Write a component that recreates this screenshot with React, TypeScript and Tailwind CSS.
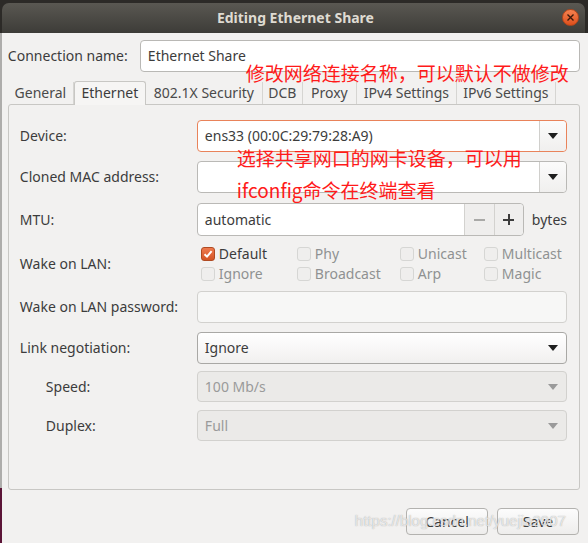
const Arrow = ({ muted = false }: { muted?: boolean }) => (
    <svg width="10" height="6" viewBox="0 0 10 6" className="shrink-0">
        <polygon points="0,0 10,0 5,6" fill={muted ? '#9a9a9a' : '#1e1e1e'} />
    </svg>
);

const Check = ({ label, checked = false }: { label: string; checked?: boolean }) => (
    <div className="flex items-center gap-[4px] h-[20px]">
        {checked ? (
            <div className="w-[14px] h-[14px] rounded-[3px] border border-[#b04a22] bg-gradient-to-b from-[#ee7a4e] to-[#d45424] flex items-center justify-center">
                <svg width="10" height="10" viewBox="0 0 10 10">
                    <path d="M1.5 5.2 L4 7.6 L8.6 2.2" stroke="#ffffff" strokeWidth="2" fill="none" />
                </svg>
            </div>
        ) : (
            <div className="w-[14px] h-[14px] rounded-[3px] border border-[#d6d6d4] bg-[#efeeed]"></div>
        )}
        <span className={checked ? 'text-[#3c3c3c]' : 'text-[#8f9192]'}>{label}</span>
    </div>
);

const Row = ({ label, indent = false, className = '', children }: { label: string; indent?: boolean; className?: string; children: React.ReactNode }) => (
    <div className={`flex items-center ${className}`}>
        <div className={`w-[177px] shrink-0 text-[#3c3c3c] ${indent ? 'pl-[26px]' : ''}`}>{label}</div>
        <div className="flex-1 h-full">{children}</div>
    </div>
);

const tabs = [
    { name: 'General', w: 'w-[66px]' },
    { name: 'Ethernet', w: 'w-[72px]', active: true },
    { name: '802.1X Security', w: 'w-[117px]' },
    { name: 'DCB', w: 'w-[40px]' },
    { name: 'Proxy', w: 'w-[54px]' },
    { name: 'IPv4 Settings', w: 'w-[100px]' },
    { name: 'IPv6 Settings', w: 'w-[99px]' },
];

export default function App() {
    return (
        <div className="w-[588px] h-[543px] relative overflow-hidden flex bg-[#2c2a27] font-['Noto_Sans','Noto_Sans_CJK_SC',sans-serif] text-[14px] leading-none">
            {/* desktop strip on the left */}
            <div className="w-[2px] flex flex-col">
                <div className="h-[33px] bg-[#2c2a27]"></div>
                <div className="h-[455px] bg-[#aeadab]"></div>
                <div className="flex-1 bg-[#5b1537]"></div>
            </div>

            <div className="flex-1 flex flex-col pt-[3px]">
                {/* title bar */}
                <div className="h-[30px] mr-[3px] rounded-t-[7px] bg-gradient-to-b from-[#5a5852] to-[#3d3c38] relative flex items-center justify-center">
                    <span className="font-bold text-[#dfdbd2] text-[14px] pl-[4px]">Editing Ethernet Share</span>
                    <div className="absolute right-[6px] top-[6px] w-[17px] h-[17px] rounded-full bg-gradient-to-b from-[#f4814f] to-[#df4f1a] border border-[#b8461a] flex items-center justify-center">
                        <svg width="7" height="7" viewBox="0 0 7 7">
                            <path d="M0.5 0.5 L6.5 6.5 M6.5 0.5 L0.5 6.5" stroke="#3a1a0c" strokeWidth="1.4" />
                        </svg>
                    </div>
                </div>

                {/* body */}
                <div className="flex-1 bg-[#f2f1f0] flex flex-col pl-[6px] pr-[8px] pt-[7px] relative">
                    <div className="flex items-center h-[32px]">
                        <div className="w-[132px] text-[#3c3c3c]">Connection name:</div>
                        <div className="flex-1 h-full rounded-[4px] border border-[#b9b8b5] bg-white flex items-center pl-[7px] text-[#3c3c3c]">
                            Ethernet Share
                        </div>
                    </div>

                    {/* tabs */}
                    <div className="flex items-end h-[24px] mt-[8px]">
                        {tabs.map((t) =>
                            t.active ? (
                                <div key={t.name} className={`${t.w} h-[24px] border border-b-0 border-[#c8c7c4] rounded-t-[3px] bg-[#f6f5f4] flex items-center justify-center text-[#3c3c3c] relative z-10 -mb-px pb-[1px]`}>
                                    {t.name}
                                </div>
                            ) : (
                                <div key={t.name} className={`${t.w} h-[22px] border-r border-[#d6d5d2] flex items-center justify-center text-[#4a4a4a]`}>
                                    {t.name}
                                </div>
                            )
                        )}
                    </div>

                    {/* notebook page */}
                    <div className="h-[386px] rounded-[3px] border border-[#c8c7c4] bg-[#f2f1f0] pl-[11px] pr-[12px] pt-[15px] flex flex-col">
                        <Row label="Device:" className="h-[32px]">
                            <div className="h-full rounded-[4px] border border-[#e9835a] bg-white flex">
                                <div className="flex-1 flex items-center pl-[7px] text-[#3c3c3c]">ens33 (00:0C:29:79:28:A9)</div>
                                <div className="w-[27px] border-l border-[#d0cfcc] bg-gradient-to-b from-[#fbfbfb] to-[#f0efee] rounded-r-[4px] flex items-center justify-center">
                                    <Arrow />
                                </div>
                            </div>
                        </Row>

                        <Row label="Cloned MAC address:" className="h-[32px] mt-[9px]">
                            <div className="h-full rounded-[4px] border border-[#bab9b6] bg-white flex">
                                <div className="flex-1"></div>
                                <div className="w-[27px] border-l border-[#d0cfcc] bg-gradient-to-b from-[#fbfbfb] to-[#f0efee] rounded-r-[4px] flex items-center justify-center">
                                    <Arrow />
                                </div>
                            </div>
                        </Row>

                        <Row label="MTU:" className="h-[33px] mt-[10px]">
                            <div className="h-full flex items-center">
                                <div className="w-[327px] h-full rounded-[4px] border border-[#bab9b6] bg-white flex">
                                    <div className="flex-1 flex items-center pl-[7px] text-[#3c3c3c]">automatic</div>
                                    <div className="w-[30px] border-l border-[#d3d2cf] bg-[#efeeed] flex items-center justify-center">
                                        <div className="w-[11px] h-[2px] bg-[#a9a9a7]"></div>
                                    </div>
                                    <div className="w-[29px] border-l border-[#d3d2cf] bg-[#efeeed] rounded-r-[4px] flex items-center justify-center relative">
                                        <div className="w-[11px] h-[2px] bg-[#3c3c3c]"></div>
                                        <div className="absolute w-[2px] h-[11px] bg-[#3c3c3c]"></div>
                                    </div>
                                </div>
                                <span className="ml-[8px] text-[#3c3c3c]">bytes</span>
                            </div>
                        </Row>

                        <Row label="Wake on LAN:" className="h-[40px] mt-[8px]">
                            <div className="grid grid-cols-[96px_103px_84px_1fr] pl-[4px]">
                                <Check label="Default" checked />
                                <Check label="Phy" />
                                <Check label="Unicast" />
                                <Check label="Multicast" />
                                <Check label="Ignore" />
                                <Check label="Broadcast" />
                                <Check label="Arp" />
                                <Check label="Magic" />
                            </div>
                        </Row>

                        <Row label="Wake on LAN password:" className="h-[32px] mt-[7px]">
                            <div className="h-full rounded-[4px] border border-[#d2d1ce] bg-[#f7f7f6]"></div>
                        </Row>

                        <Row label="Link negotiation:" className="h-[32px] mt-[9px]">
                            <div className="h-full rounded-[4px] border border-[#a9a8a5] bg-gradient-to-b from-[#ffffff] to-[#f1f0ef] flex items-center pl-[7px] pr-[8px] text-[#3c3c3c]">
                                <span className="flex-1">Ignore</span>
                                <Arrow />
                            </div>
                        </Row>

                        <Row label="Speed:" indent className="h-[31px] mt-[7px]">
                            <div className="h-full rounded-[4px] border border-[#d2d1ce] bg-[#ebeae8] flex items-center pl-[7px] pr-[8px] text-[#9a9a9a]">
                                <span className="flex-1">100 Mb/s</span>
                                <Arrow muted />
                            </div>
                        </Row>

                        <Row label="Duplex:" indent className="h-[31px] mt-[8px]">
                            <div className="h-full rounded-[4px] border border-[#d2d1ce] bg-[#ebeae8] flex items-center pl-[7px] pr-[8px] text-[#9a9a9a]">
                                <span className="flex-1">Full</span>
                                <Arrow muted />
                            </div>
                        </Row>
                    </div>

                    {/* buttons */}
                    <div className="flex justify-end gap-[9px] mt-[18px] pr-[1px]">
                        <div className="w-[82px] h-[27px] rounded-[4px] border border-[#b3b2af] bg-gradient-to-b from-[#fcfcfc] to-[#eeedec] flex items-center justify-center text-[#3c3c3c]">
                            Cancel
                        </div>
                        <div className="w-[82px] h-[27px] rounded-[4px] border border-[#b3b2af] bg-gradient-to-b from-[#fcfcfc] to-[#eeedec] flex items-center justify-center text-[#3c3c3c]">
                            Save
                        </div>
                    </div>

                    {/* red annotations */}
                    <div className="absolute left-[244px] top-[30px] text-[19px] text-[#ff1a1a] font-['Noto_Sans_CJK_SC',sans-serif] leading-none">
                        修改网络连接名称，可以默认不做修改
                    </div>
                    <div className="absolute left-[235px] top-[109px] text-[19px] text-[#ff1a1a] font-['Noto_Sans_CJK_SC',sans-serif] leading-[32px]">
                        <div>选择共享网口的网卡设备，可以用</div>
                        <div>ifconfig命令在终端查看</div>
                    </div>

                    {/* watermark */}
                    <div className="absolute left-[353px] top-[480px] text-[15px] text-white/70 font-['Liberation_Sans',sans-serif] [text-shadow:0_0_1px_rgba(120,120,120,0.7)]">
                        https://blog.csdn.net/yuejia2907
                    </div>
                </div>
            </div>
        </div>
    );
}
